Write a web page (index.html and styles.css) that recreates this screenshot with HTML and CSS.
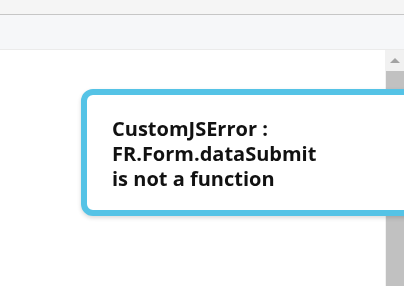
FILE: index.html
```html
<!DOCTYPE html>
<html lang="en">
<head>
    <meta charset="UTF-8">
    <title>Form</title>
    <link rel="stylesheet" href="styles.css">
</head>
<body>
    <div class="top-bar"></div>
    <div class="tool-bar"></div>
    <div class="content">
        <div class="main"></div>
        <div class="scrollbar">
            <div class="scroll-up"><span class="arrow"></span></div>
            <div class="scroll-thumb"></div>
        </div>
    </div>

    <div class="overlay">
        <div class="toast">
            <p class="toast-text">CustomJSError :<br>FR.Form.dataSubmit<br>is not a function</p>
        </div>
    </div>
</body>
</html>
```

FILE: styles.css
```css
html,
body {
    margin: 0;
    height: 100%;
    overflow: hidden;
}

body {
    font-family: "Open Sans", "Noto Sans", Arial, sans-serif;
    background: #fff;
    display: flex;
    flex-direction: column;
}

.top-bar {
    height: 14px;
    background-color: #f5f5f5;
    border-bottom: 1px solid #c6c6c6;
}

.tool-bar {
    height: 34px;
    background-color: #f6f7f9;
    border-bottom: 1px solid #ebebeb;
}

.content {
    flex: 1;
    display: flex;
}

.main {
    flex: 1;
    background: #fff;
}

.scrollbar {
    width: 18px;
    background-color: #f1f1f1;
    display: flex;
    flex-direction: column;
    padding-left: 1px;
}

.scroll-up {
    height: 21px;
    display: flex;
    align-items: center;
    justify-content: center;
}

.arrow {
    width: 0;
    height: 0;
    border-left: 5px solid transparent;
    border-right: 5px solid transparent;
    border-bottom: 5px solid #a3a3a3;
}

.scroll-thumb {
    flex: 1;
    background-color: #c1c1c1;
}

/* popup layer, clipped to the window */
.overlay {
    position: fixed;
    top: 0;
    left: 0;
    right: 0;
    bottom: 0;
    overflow: hidden;
    pointer-events: none;
}

.toast {
    position: absolute;
    left: 81px;
    top: 89px;
    width: 340px;
    height: 115px;
    border: 6px solid #55c3e6;
    border-radius: 12px;
    background: #fff;
    box-shadow: 0 2px 4px rgba(0, 0, 0, 0.15);
}

.toast-text {
    margin: 21px 0 0 25px;
    font-size: 20px;
    line-height: 25px;
    font-weight: bold;
    color: #111;
}
```
